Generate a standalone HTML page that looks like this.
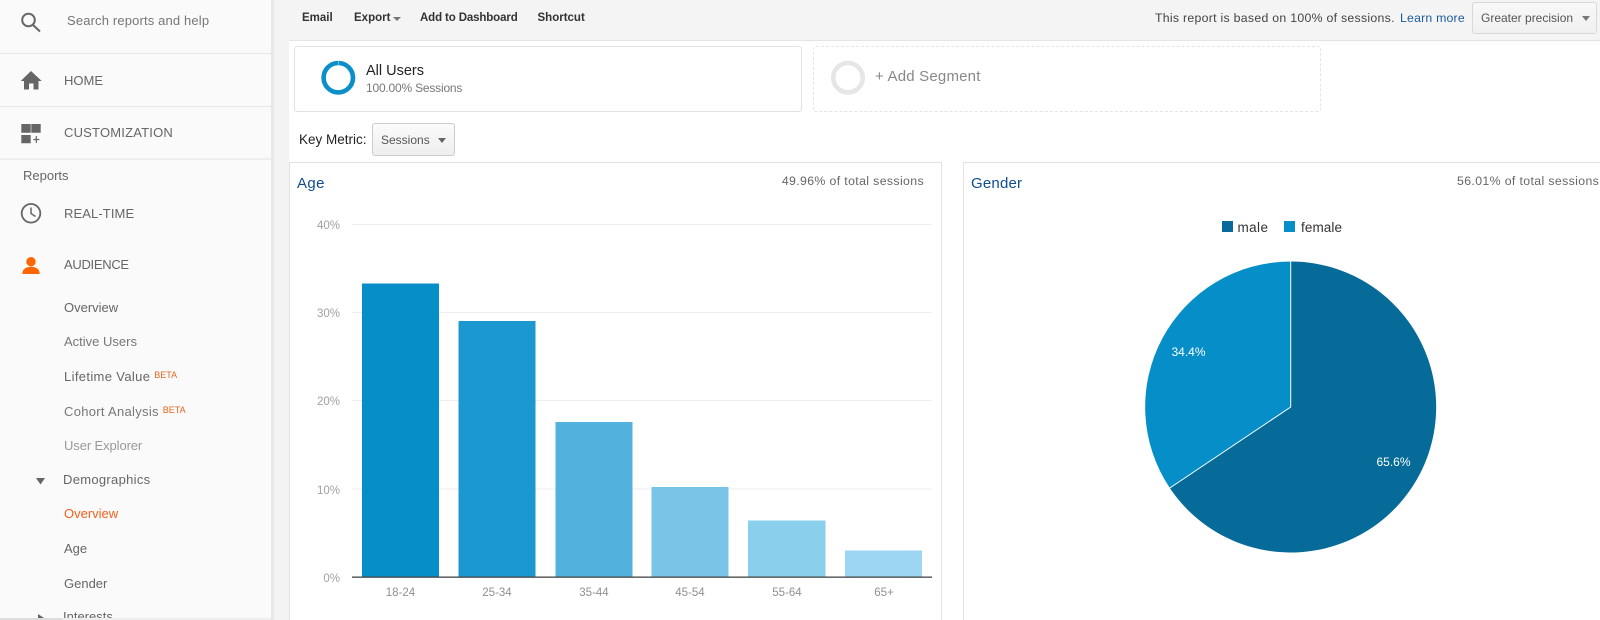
<!DOCTYPE html>
<html style="overflow:hidden;height:620px"><head><meta charset="utf-8"><style>
html,body{margin:0;padding:0;background:#fff}
body{height:620px;overflow:hidden}
#w{position:relative;width:1600px;height:620px;overflow:hidden;font-family:"Liberation Sans",sans-serif;color:#555}
.t{position:absolute;white-space:nowrap;line-height:16px;transform:translateY(-8px);font-size:13px}
.b{position:absolute}
sup{font-size:9px;color:#e8651c;position:relative;top:-3px;vertical-align:baseline;margin-left:0;letter-spacing:0}
</style></head><body><div id="w">
<div class="b" style="left:271px;top:0;width:1329px;height:40px;background:#f4f4f4"></div>
<div class="b" style="left:289px;top:40px;width:1311px;height:1px;background:#e4e4e4"></div>
<div class="b" style="left:271px;top:40px;width:18px;height:580px;background:#f3f3f3"></div>
<div class="b" style="left:289px;top:41px;width:1311px;height:121px;background:#fff"></div>

<div class="b" style="left:0;top:0;width:271px;height:620px;background:#fafafa;border-right:3px solid #e8e8e8;box-sizing:content-box"></div>
<div class="b" style="left:0;top:53px;width:271px;height:1px;background:#e6e6e6"></div>
<div class="b" style="left:0;top:106px;width:271px;height:1px;background:#e6e6e6"></div>
<div class="b" style="left:0;top:158px;width:271px;height:2px;background:#eee"></div>

<svg class="b" style="left:0;top:0" width="271" height="620" viewBox="0 0 271 620">
<circle cx="28.500" cy="20" r="6.300" fill="none" stroke="#666" stroke-width="2"/><path d="M33 25L40 31.500" stroke="#666" stroke-width="2" fill="none"/>
<path d="M31 71L20.700 81H24V89.500H29V83.500H33.500V89.500H38.500V81H41.700Z" fill="#666"/>
<path d="M21.300 124H30.700V132.700H21.300ZM31.300 124H40.700V132.700H31.300ZM21.300 135H30.700V143.300H21.300Z" fill="#666"/><path d="M36.300 136V143M33.300 139.500H39.300" stroke="#666" stroke-width="1.200"/>
<circle cx="31" cy="213.300" r="9.300" fill="none" stroke="#666" stroke-width="1.800"/><path d="M31 207.500V213.500L35.500 216.500" stroke="#666" stroke-width="1.500" fill="none"/>
<circle cx="31" cy="261.700" r="4.700" fill="#f60"/><path d="M22.300 274C22.300 268.500 27 266.800 31 266.800S39.700 268.500 39.700 274Z" fill="#f60"/>
<path d="M36 478H45L40.500 484.500Z" fill="#666"/>
<path d="M38 614L44 618V620H38Z" fill="#666"/>
</svg>

<div class="t" style="left:67px;top:21px;color:#777;letter-spacing:.15px">Search reports and help</div>
<div class="t" style="left:64px;top:81px;color:#666">HOME</div>
<div class="t" style="left:64px;top:133px;color:#666;letter-spacing:.2px">CUSTOMIZATION</div>
<div class="t" style="left:23px;top:176px;color:#666">Reports</div>
<div class="t" style="left:64px;top:214px;color:#666;letter-spacing:.1px">REAL-TIME</div>
<div class="t" style="left:64px;top:265px;color:#666;letter-spacing:-.3px">AUDIENCE</div>
<div class="t" style="left:64px;top:308px;color:#666">Overview</div>
<div class="t" style="left:64px;top:342px;color:#777">Active Users</div>
<div class="t" style="left:64px;top:377px;color:#666;letter-spacing:.35px">Lifetime Value <sup>BETA</sup></div>
<div class="t" style="left:64px;top:412px;color:#777;letter-spacing:.3px">Cohort Analysis <sup>BETA</sup></div>
<div class="t" style="left:64px;top:446px;color:#999;letter-spacing:-.1px">User Explorer</div>
<div class="t" style="left:63px;top:480px;color:#666;letter-spacing:.3px">Demographics</div>
<div class="t" style="left:64px;top:514px;color:#f4601b">Overview</div>
<div class="t" style="left:64px;top:549px;color:#666">Age</div>
<div class="t" style="left:64px;top:584px;color:#666">Gender</div>
<div class="t" style="left:63px;top:617px;color:#666">Interests</div>
<div class="b" style="left:0;top:618px;width:62px;height:2px;background:#ddd"></div>
<div class="b" style="left:62px;top:618px;width:209px;height:2px;background:#eee"></div>

<div class="t" style="left:302px;top:18px;font-size:11.500px;font-weight:bold;color:#333">Email</div>
<div class="t" style="left:354px;top:18px;font-size:11.500px;font-weight:bold;color:#333">Export</div>
<div class="b" style="left:393px;top:17px;border:4px solid transparent;border-top:4px solid #777;border-bottom:0"></div>
<div class="t" style="left:420px;top:18px;font-size:11.500px;font-weight:bold;color:#333;letter-spacing:-.13px">Add to Dashboard</div>
<div class="t" style="left:537.500px;top:18px;font-size:11.500px;font-weight:bold;color:#333">Shortcut</div>

<div class="t" style="left:1155px;top:18px;font-size:12.300px;color:#444;letter-spacing:.28px">This report is based on 100% of sessions.</div>
<div class="t" style="left:1400px;top:18px;font-size:12.300px;color:#1a5c9e;letter-spacing:.2px">Learn more</div>
<div class="b" style="left:1472px;top:2px;width:125px;height:32px;box-sizing:border-box;border:1px solid #d8d8d8;border-radius:3px;background:linear-gradient(#f8f8f8,#f0f0f0)"></div>
<div class="t" style="left:1481px;top:18px;font-size:12px;color:#555">Greater precision</div>
<div class="b" style="left:1582px;top:16px;border:4px solid transparent;border-top:5px solid #777;border-bottom:0"></div>

<div class="b" style="left:294px;top:46px;width:508px;height:66px;box-sizing:border-box;border:1px solid #e2e2e2;border-radius:3px;background:#fff"></div>
<div class="b" style="left:813px;top:46px;width:508px;height:66px;box-sizing:border-box;border:1px dashed #e4e4e4;border-radius:3px;background:#fff"></div>
<svg class="b" style="left:315px;top:55px" width="50" height="46"><circle cx="23.300" cy="22.700" r="14.700" fill="none" stroke="#0a8fc9" stroke-width="4.600" stroke-dasharray="91.800 .6" transform="rotate(-89 23.300 22.700)"/></svg>
<svg class="b" style="left:826px;top:55px" width="50" height="46"><circle cx="22" cy="22.700" r="14.700" fill="none" stroke="#e6e6e6" stroke-width="4.600"/></svg>
<div class="t" style="left:366px;top:71px;font-size:14.500px;color:#222">All Users</div>
<div class="t" style="left:366px;top:88px;font-size:12px;color:#777;letter-spacing:-.2px">100.00% Sessions</div>
<div class="t" style="left:875px;top:77px;font-size:15px;color:#888;letter-spacing:.2px">+ Add Segment</div>

<div class="t" style="left:299px;top:140px;font-size:13.500px;color:#222">Key Metric:</div>
<div class="b" style="left:372px;top:123px;width:83px;height:33px;box-sizing:border-box;border:1px solid #ccc;border-radius:3px;background:linear-gradient(#fbfbfb,#eee)"></div>
<div class="t" style="left:381px;top:140px;font-size:12px;color:#555">Sessions</div>
<div class="b" style="left:438px;top:138px;border:4px solid transparent;border-top:5px solid #666;border-bottom:0"></div>

<div class="b" style="left:289px;top:162px;width:653px;height:470px;box-sizing:border-box;border:1px solid #e2e2e2;background:#fff"></div>
<div class="b" style="left:963px;top:162px;width:650px;height:470px;box-sizing:border-box;border:1px solid #e2e2e2;background:#fff"></div>
<div class="t" style="left:297px;top:184px;font-size:15px;color:#0f4c92;letter-spacing:.4px">Age</div>
<div class="t" style="left:971px;top:184px;font-size:15px;color:#0f4c92;letter-spacing:.2px">Gender</div>
<div class="t" style="right:676px;top:181px;font-size:12.300px;color:#666;letter-spacing:.37px">49.96% of total sessions</div>
<div class="t" style="left:1457px;top:181px;font-size:12.300px;color:#666;letter-spacing:.37px">56.01% of total sessions</div>

<svg class="b" style="left:0;top:0" width="1600" height="620" viewBox="0 0 1600 620" font-family="Liberation Sans, sans-serif">
<g transform="translate(0,-.5)">
<g fill="#eee"><rect x="352" y="224.500" width="580" height="1"/><rect x="352" y="312.500" width="580" height="1"/><rect x="352" y="400.500" width="580" height="1"/><rect x="352" y="489" width="580" height="1"/></g>
<rect x="362" y="284" width="77" height="293" fill="#068ec8"/>
<rect x="458.500" y="321.500" width="77" height="255.500" fill="#1b98d0"/>
<rect x="555.500" y="422.500" width="77" height="154.500" fill="#53b2dd"/>
<rect x="651.500" y="487.500" width="77" height="89.500" fill="#78c5e7"/>
<rect x="748" y="521" width="77.500" height="56" fill="#8ad0ed"/>
<rect x="845" y="551" width="77" height="26" fill="#9dd6f2"/>
<rect x="352" y="577" width="580" height="1.300" fill="#444"/>
</g>
<g fill="#a0a0a0" font-size="11.500" text-anchor="end">
<text x="340" y="229">40%</text><text x="340" y="317">30%</text><text x="340" y="405">20%</text><text x="340" y="494">10%</text><text x="340" y="582">0%</text></g>
<g fill="#909090" font-size="11.500" text-anchor="middle">
<text x="400.500" y="596">18-24</text><text x="497" y="596">25-34</text><text x="594" y="596">35-44</text><text x="690" y="596">45-54</text><text x="787" y="596">55-64</text><text x="884" y="596">65+</text></g>

<rect x="1222" y="221" width="11" height="11" fill="#066b98"/>
<text x="1237.500" y="232" font-size="13.500" fill="#333" letter-spacing=".4">male</text>
<rect x="1284" y="221" width="11" height="11" fill="#068ec8"/>
<text x="1301" y="232" font-size="13.500" fill="#333" letter-spacing=".1">female</text>

<path d="M1290.700 407V261.500A145.500 145.500 0 1 1 1169.800 488Z" fill="#066b98"/>
<path d="M1290.700 407L1169.800 488A145.500 145.500 0 0 1 1290.700 261.500Z" fill="#068ec8"/>
<path d="M1290.700 261.500V407L1169.800 488" fill="none" stroke="#fff" stroke-width="1"/>
<text x="1171.500" y="356" font-size="12" fill="#fff">34.4%</text>
<text x="1376.500" y="466" font-size="12" fill="#fff">65.6%</text>
</svg>
</div></body></html>
